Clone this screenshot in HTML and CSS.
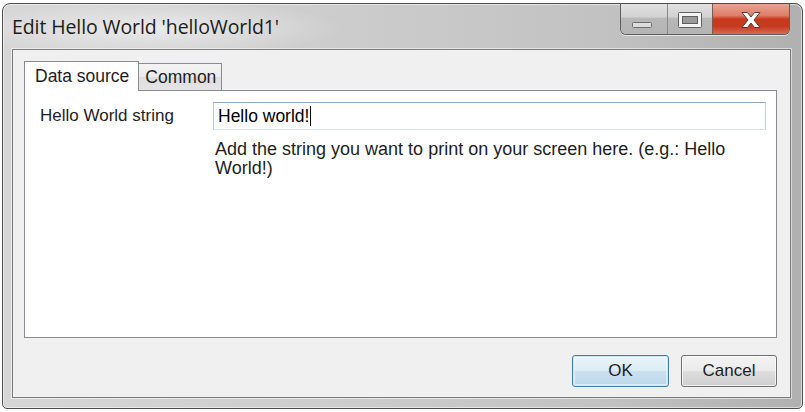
FILE: index.html
```html
<!DOCTYPE html>
<html>
<head>
<meta charset="utf-8">
<link rel="stylesheet" href="styles.css">
</head>
<body>
<div class="window">
  <div class="titlebar">
    <div class="title">Edit Hello World 'helloWorld1'</div>
    <div class="caption">
      <div class="cbtn cmin">
        <svg width="24" height="8" viewBox="0 0 24 8"><rect x="2.5" y="1.5" width="19" height="5" rx="1" fill="#dcdcdc" stroke="#6e6e6e" stroke-width="1"/></svg>
      </div>
      <div class="cbtn cmax">
        <svg width="26" height="18" viewBox="0 0 26 18"><rect x="1.5" y="1.5" width="23" height="15" rx="1" fill="#f4f4f4" stroke="#5e5e5e"/><rect x="5.5" y="5.5" width="15" height="7" fill="#9a9a9a" stroke="#5e5e5e"/></svg>
      </div>
      <div class="cbtn cclose">
        <svg width="26" height="18" viewBox="0 0 26 18"><path d="M4 1.5 H9.5 L13 6 L16.5 1.5 H22 L16 9 L22 16.5 H16.5 L13 12 L9.5 16.5 H4 L10 9 Z" fill="#ffffff" stroke="#5a3a34" stroke-width="1" stroke-linejoin="round"/></svg>
      </div>
    </div>
  </div>
  <div class="client">
    <div class="tabs">
      <div class="tab active">Data source</div>
      <div class="tab">Common</div>
    </div>
    <div class="panel">
      <div class="form">
        <div class="label">Hello World string</div>
        <div class="input">Hello world!<span class="caret"></span></div>
        <div></div>
        <div class="help">Add the string you want to print on your screen here. (e.g.: Hello World!)</div>
      </div>
    </div>
    <div class="footer">
      <div class="btn default">OK</div>
      <div class="btn">Cancel</div>
    </div>
  </div>
</div>
</body>
</html>
```
FILE: styles.css
```css
* { box-sizing: border-box; }
html, body { margin: 0; padding: 0; background: #ffffff; }
body { font-family: "Liberation Sans", Arial, sans-serif; color: #1e1e1e; }

.window {
  margin: 3px 0 0 2px;
  width: 801px;
  height: 406px;
  border: 1px solid #4e4e4e;
  border-radius: 8px 8px 5px 5px;
  background:
    radial-gradient(ellipse 190px 28px at 150px 24px, rgba(255,255,255,0.55), rgba(255,255,255,0) 100%),
    linear-gradient(to right, #d6d6d6 0%, #cdcdcd 40%, #c2c2c2 75%, #b0b0b0 100%);
  box-shadow: inset 0 0 0 1px rgba(255,255,255,0.55);
  display: flex;
  flex-direction: column;
  overflow: hidden;
}

.titlebar {
  height: 45px;
  display: flex;
  align-items: flex-start;
  flex: none;
}
.title {
  font-family: "Open Sans", "Noto Sans", sans-serif;
  font-size: 19.5px;
  color: #1b1b1b;
  padding: 11px 0 0 9px;
  line-height: 24px;
  letter-spacing: -0.1px;
}
.caption {
  margin-left: auto;
  margin-right: 12px;
  margin-top: -1px;
  display: flex;
  height: 32px;
  border: 1px solid #5f5f5f;
  border-top: none;
  border-radius: 0 0 6px 6px;
  overflow: hidden;
  box-shadow: 0 1px 0 rgba(255,255,255,0.6);
}
.cbtn {
  display: flex;
  align-items: center;
  justify-content: center;
  height: 100%;
}
.cmin {
  width: 47px;
  background: linear-gradient(to bottom, #e2e2e2 0%, #d2d2d2 45%, #b8b8b8 50%, #b4b4b4 100%);
  border-right: 1px solid #8a8a8a;
  padding-top: 13px;
  padding-right: 4px;
}
.cmax {
  width: 45px;
  background: linear-gradient(to bottom, #e2e2e2 0%, #d2d2d2 45%, #b8b8b8 50%, #b4b4b4 100%);
  border-right: 1px solid #7a5a55;
  padding-top: 2px;
}
.cclose {
  width: 76px;
  background: linear-gradient(to bottom, #e9a797 0%, #dd7e69 40%, #c9391c 52%, #c53a1f 75%, #d96a55 100%);
  padding-top: 2px;
}

.client {
  flex: 1;
  margin: 0 11px 10px 9px;
  border: 1px solid #7d7d7d;
  background: #f0f0f0;
  padding: 11px 13px 10px 11px;
  display: flex;
  flex-direction: column;
  box-shadow: 0 0 0 1px rgba(255,255,255,0.5);
}

.tabs {
  display: flex;
  align-items: flex-end;
  height: 29px;
  flex: none;
  position: relative;
  z-index: 1;
}
.tab {
  font-size: 17.5px;
  border: 1px solid #898c95;
  border-bottom: none;
  background: linear-gradient(to bottom, #f4f4f4 0%, #ebebeb 50%, #dedede 51%, #e4e4e4 100%);
  height: 27px;
  padding: 3px 5px 0 6px;
  line-height: 21px;
  margin-left: -1px;
}
.tab.active {
  background: #ffffff;
  height: 30px;
  margin-bottom: -1px;
  margin-left: 0;
  padding: 4px 9px 0 10px;
  border-right: 1px solid #898c95;
}

.panel {
  flex: 1;
  background: #ffffff;
  border: 1px solid #898c95;
  padding: 11px 10px 0 15px;
}
.form {
  display: grid;
  grid-template-columns: 173px 1fr;
  row-gap: 10px;
}
.label {
  font-size: 17px;
  line-height: 28px;
}
.input {
  height: 28px;
  border: 1px solid;
  border-color: #90a8c0 #c3d4e4 #d6e2ec #b4c8da;
  font-size: 17.5px;
  line-height: 26px;
  padding-left: 4px;
  color: #000;
}
.caret {
  display: inline-block;
  width: 1px;
  height: 20px;
  background: #000;
  vertical-align: -4px;
  margin-left: 1px;
}
.help {
  font-size: 18px;
  line-height: 19px;
  padding-left: 2px;
  padding-right: 4px;
  color: #1e1e1e;
}

.footer {
  flex: none;
  margin-top: 17px;
  display: flex;
  justify-content: flex-end;
  gap: 12px;
}
.btn {
  width: 96px;
  height: 32px;
  border: 1px solid #707070;
  border-radius: 3px;
  background: linear-gradient(to bottom, #f3f3f3 0%, #ebebeb 48%, #dddddd 52%, #cfcfcf 100%);
  box-shadow: inset 0 0 0 1px rgba(255,255,255,0.7);
  font-size: 17px;
  text-align: center;
  line-height: 30px;
  color: #1e1e1e;
}
.btn.default {
  width: 97px;
  border-color: #3c7fb1;
  background: linear-gradient(to bottom, #eaf5fb 0%, #dcecf6 48%, #c9e0ef 52%, #bcd7ea 100%);
  box-shadow: inset 0 0 0 1px #c8e6f8, inset 0 0 0 2px rgba(255,255,255,0.5);
}
```
